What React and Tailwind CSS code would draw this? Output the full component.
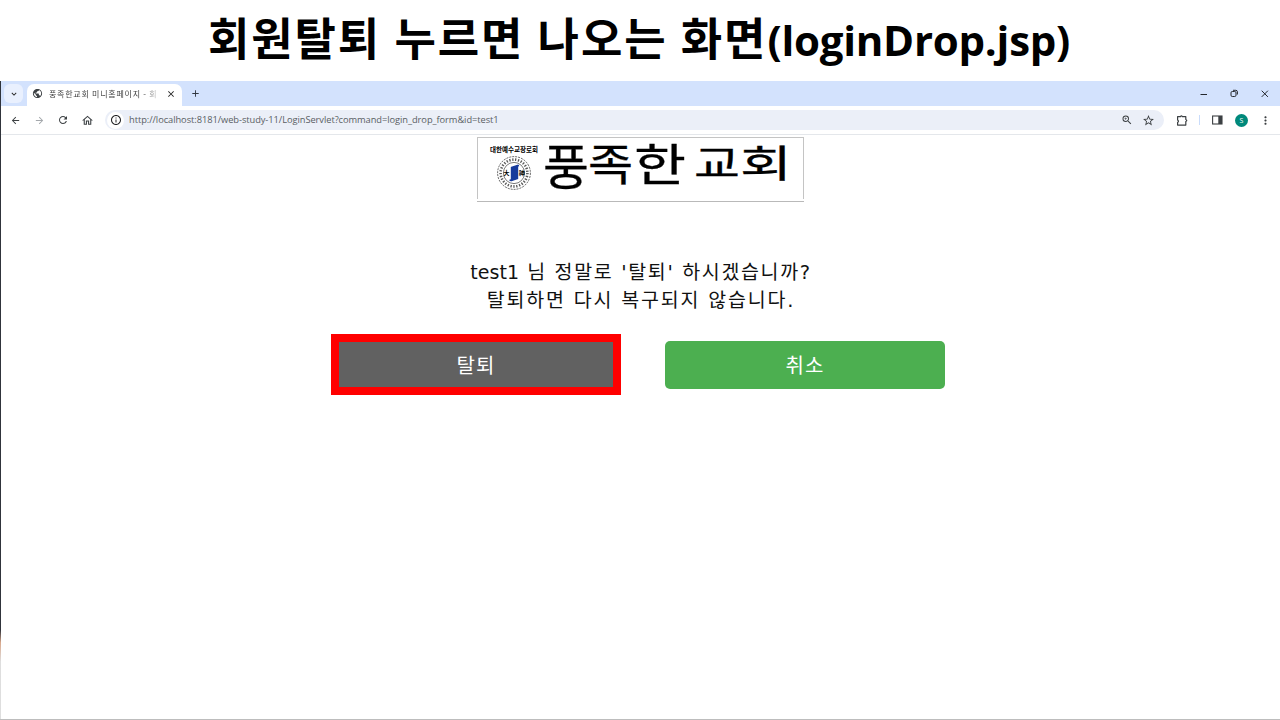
import {
  MdArrowBack, MdArrowForward, MdRefresh, MdOutlineHome, MdInfoOutline, MdZoomIn,
  MdStarOutline, MdMoreVert, MdClose, MdAdd, MdPublic, MdKeyboardArrowDown,
} from 'react-icons/md';

function TabStrip() {
  return (
    <div className="flex h-[25px] items-center bg-[#d3e2fd]">
      <div className="ml-[3px] flex h-[19px] w-[19px] items-center justify-center rounded-[6px] bg-[#e9f0fe] text-[#1f1f1f]">
        <MdKeyboardArrowDown size={10} />
      </div>
      <div className="ml-[4px] flex h-[22px] w-[155px] items-center self-end rounded-t-[7px] bg-white pb-[3px] pl-[5px]">
        <MdPublic size={11} className="shrink-0 text-[#3c4043]" />
        <div className="ml-[6px] w-[112px] overflow-hidden whitespace-nowrap bg-gradient-to-r from-[#3a3a3a] from-85% to-transparent bg-clip-text font-['Noto_Sans_CJK_KR',sans-serif] text-[8px] leading-[14px] tracking-[0.75px] text-transparent">
          풍족한교회 미니홈페이지 - 회
        </div>
        <MdClose size={10} className="ml-[5px] shrink-0 text-[#1f1f1f]" />
      </div>
      <MdAdd size={11} className="ml-[8px] text-[#303640]" />
      <div className="ml-auto flex items-center text-[#24272c]">
        <svg width="8" height="8" viewBox="0 0 8 8" stroke="currentColor"><path d="M.5 4.5h6.5" /></svg>
        <svg className="ml-[22px]" width="9" height="9" viewBox="0 0 9 9" fill="none" stroke="currentColor">
          <rect x="1" y="2.5" width="5" height="5" rx="1.3" />
          <path d="M3 1.3h2.8q1.6 0 1.6 1.6V5.5" />
        </svg>
        <svg className="ml-[22px] mr-[11px]" width="8" height="8" viewBox="0 0 8 8" stroke="currentColor"><path d="M.7.7l6.2 6.2M6.9.7L.7 6.9" /></svg>
      </div>
    </div>
  );
}

function Toolbar() {
  return (
    <div className="flex h-[29px] items-center border-b border-[#e4e7eb] bg-white text-[#3c4043]">
      <MdArrowBack size={11} className="ml-[9px]" />
      <MdArrowForward size={11} className="ml-[13px] text-[#a4a8ac]" />
      <MdRefresh size={12} className="ml-[12px]" />
      <MdOutlineHome size={13} className="ml-[12px]" />
      <div className="ml-[11px] flex h-[20px] w-[1059px] items-center rounded-full bg-[#ebeff8] pl-[2px]">
        <div className="flex h-[17px] w-[17px] items-center justify-center rounded-full bg-white">
          <MdInfoOutline size={12} className="text-[#202124]" />
        </div>
        <div className="ml-[5px] whitespace-nowrap font-['Open_Sans',sans-serif] text-[9.3px] leading-[16px] tracking-[-0.06px] text-[#5a5e63]">
          http://localhost:8181/web-study-11/LoginServlet?command=login_drop_form&amp;id=test1
        </div>
        <MdZoomIn size={12} className="ml-auto" />
        <MdStarOutline size={13} className="ml-[9px] mr-[9px]" />
      </div>
      <svg className="ml-[12px]" width="13" height="13" viewBox="0 0 13 13" fill="none" stroke="currentColor" strokeWidth="1.2">
        <path d="M1.6 2.6h2.9q.9-1.7 1.8 0h3.5v2.9q1.9.9 0 2v3.6H1.6V8.4q1.7-1.2 0-2.4z" strokeLinejoin="round" />
      </svg>
      <div className="ml-[10px] h-[10px] w-px bg-[#c9dcfb]" />
      <svg className="ml-[12px]" width="11" height="10" viewBox="0 0 11 10">
        <rect x=".6" y="1" width="9.4" height="8" fill="none" stroke="currentColor" strokeWidth="1.1" />
        <path d="M6.3 1H10v8H6.3z" fill="currentColor" />
      </svg>
      <div className="ml-[12px] flex h-[13px] w-[13px] items-center justify-center rounded-full bg-[#00897b] font-['Open_Sans',sans-serif] text-[7px] leading-none text-white">S</div>
      <MdMoreVert size={13} className="ml-[11px]" />
    </div>
  );
}

function ChurchLogo() {
  return (
    <div className="flex h-[65px] w-[327px] flex-col border-b border-[#b9b9b9]">
      <div className="h-[62px] border-x border-t border-[#c4c4c4]">
        <svg width="325" height="61" viewBox="478 138 325 61" className="overflow-visible font-['Noto_Sans_CJK_KR',sans-serif]">
          <text x="490" y="152" fontSize="6.4" fontWeight="700" textLength="48" lengthAdjust="spacingAndGlyphs">대한예수교장로회</text>
          <g fill="none" stroke="#222">
            <circle cx="514" cy="173" r="16.4" strokeWidth=".7" strokeDasharray="2 1" />
            <circle cx="514" cy="173" r="13.4" strokeWidth="2.6" strokeDasharray="1.3 1.6" opacity=".75" />
            <circle cx="514" cy="173" r="10.6" strokeWidth=".6" />
          </g>
          <path d="M511.5 167.5l6-2v13l-6 2z M509.5 180.5l6-2M512 167.5l7-2" fill="#173b9c" stroke="#173b9c" strokeWidth="1.4" />
          <text x="503.6" y="175" fontSize="6" fontWeight="700">大</text>
          <text x="518.8" y="175" fontSize="6" fontWeight="700">神</text>
          <g fontSize="49" fontWeight="400" stroke="#000" strokeWidth=".3">
            <text x="543" y="185" textLength="46" lengthAdjust="spacingAndGlyphs">풍</text>
            <text x="588" y="181" fontSize="44" textLength="45" lengthAdjust="spacingAndGlyphs">족</text>
            <text x="634" y="181" fontSize="44" textLength="52" lengthAdjust="spacingAndGlyphs">한</text>
            <text x="694" y="177" fontSize="38" textLength="46" lengthAdjust="spacingAndGlyphs">교</text>
            <text x="740" y="177" fontSize="38" textLength="52" lengthAdjust="spacingAndGlyphs">회</text>
          </g>
        </svg>
      </div>
    </div>
  );
}

export default function App() {
  return (
    <div className="flex h-[720px] w-[1280px] flex-col overflow-hidden bg-white">
      <h1 className="flex h-[81px] shrink-0 items-baseline justify-center whitespace-nowrap pr-[2px] pt-[2px] font-bold leading-[70px] text-black">
        <span className="font-['Noto_Sans_CJK_KR',sans-serif] text-[45px] tracking-[1.9px] [word-spacing:1.2px]">회원탈퇴 누르면 나오는 화면</span>
        <span className="font-['Open_Sans',sans-serif] text-[42px] tracking-[-0.25px]">(loginDrop.jsp)</span>
      </h1>
      <div className="flex min-h-0 flex-1 border-b border-[#bdbdbd]">
        <div className="w-px shrink-0 bg-gradient-to-b from-[#30343b] from-86% via-[#d9a88c] via-88% to-[#dedede] to-91%" />
        <div className="flex min-w-0 flex-1 flex-col">
          <TabStrip />
          <Toolbar />
          <main className="flex flex-col items-center pr-px pt-[2px]">
            <ChurchLogo />
            <div className="mt-[56px] text-center font-['DejaVu_Sans','Noto_Sans_CJK_KR',sans-serif] text-[19.5px] leading-[28px] text-[#111]">
              <p className="whitespace-nowrap pl-[2px] tracking-[1.65px]"><span className="text-[19px] tracking-[0.1px]">test1</span> 님 정말로 '탈퇴' 하시겠습니까?</p>
              <p className="whitespace-nowrap pl-[2px] tracking-[1.8px]">탈퇴하면 다시 복구되지 않습니다.</p>
            </div>
            <div className="mt-[19px] flex w-[618px] items-start gap-[44px] font-['Noto_Sans_CJK_KR',sans-serif] text-[20px] tracking-[1px] text-white">
              <button className="h-[61px] w-[290px] border-[8px] border-[#ff0000] bg-[#616161] leading-[44px]">탈퇴</button>
              <button className="mt-[7px] h-[48px] w-[280px] rounded-[5px] bg-[#4caf50]">취소</button>
            </div>
          </main>
        </div>
      </div>
    </div>
  );
}
